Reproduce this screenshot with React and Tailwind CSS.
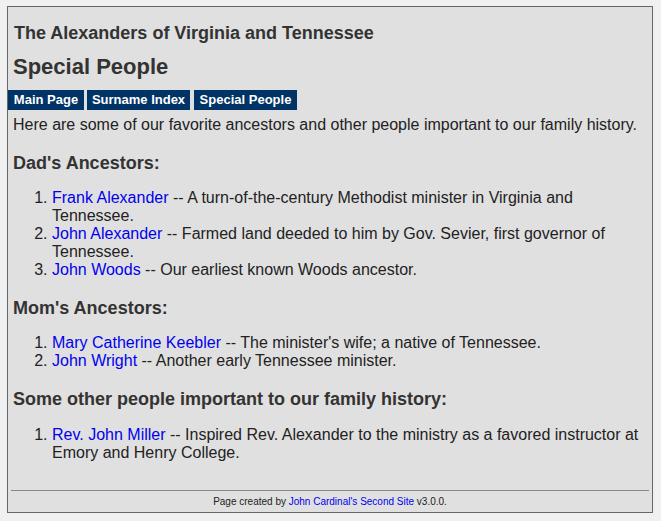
import React from "react";

const dad = [
  { name: "Frank Alexander", text: "A turn-of-the-century Methodist minister in Virginia and Tennessee." },
  { name: "John Alexander", text: "Farmed land deeded to him by Gov. Sevier, first governor of Tennessee." },
  { name: "John Woods", text: "Our earliest known Woods ancestor." },
];

const mom = [
  { name: "Mary Catherine Keebler", text: "The minister's wife; a native of Tennessee." },
  { name: "John Wright", text: "Another early Tennessee minister." },
];

const others = [
  { name: "Rev. John Miller", text: "Inspired Rev. Alexander to the ministry as a favored instructor at Emory and Henry College." },
];

function PeopleList({ items }) {
  return (
    <ol className="list-decimal pl-[39px] text-[16px] leading-[18px]">
      {items.map((p) => (
        <li key={p.name}>
          <a href="#" className="text-[#0000ee]">{p.name}</a> -- {p.text}
        </li>
      ))}
    </ol>
  );
}

function Heading({ children, className }) {
  return <h3 className={"text-[18px] leading-[22px] font-bold text-[#333] " + className}>{children}</h3>;
}

export default function App() {
  return (
    <div className="min-h-[521px] bg-[#f0f0f0] pt-[6px] px-[7px] font-['Liberation_Sans',Arial,sans-serif] text-[#222]">
      <div className="w-[646px] h-[507px] border border-[#666] bg-[#e0e0e0] px-[5px] flex flex-col">
        <h1 className="mt-[16px] ml-[1px] text-[18px] leading-[20px] font-bold text-[#333]">
          The Alexanders of Virginia and Tennessee
        </h1>
        <h2 className="mt-[11px] text-[22px] leading-[26px] font-bold text-[#333]">Special People</h2>
        <nav className="mt-[10px] -ml-[5px] flex gap-[3px] text-[13px] font-bold text-white">
          <a href="#" className="h-[20px] w-[76px] bg-[#003366] flex items-center justify-center">Main Page</a>
          <a href="#" className="h-[20px] w-[103px] bg-[#003366] flex items-center justify-center">Surname Index</a>
          <a href="#" className="ml-[1px] h-[20px] w-[103px] bg-[#003366] flex items-center justify-center">Special People</a>
        </nav>
        <p className="mt-[6px] text-[16px] leading-[18px]">
          Here are some of our favorite ancestors and other people important to our family history.
        </p>

        <Heading className="mt-[18px] mb-[15px]">Dad's Ancestors:</Heading>
        <PeopleList items={dad} />

        <Heading className="mt-[18px] mb-[15px]">Mom's Ancestors:</Heading>
        <PeopleList items={mom} />

        <Heading className="mt-[18px] mb-[16px]">Some other people important to our family history:</Heading>
        <PeopleList items={others} />

        <div className="mt-auto">
          <hr className="mx-[-2px] border-t border-[#888]" />
          <p className="pt-[5px] pb-[4px] text-center text-[10px] leading-[12px] text-[#222]">
            Page created by <a href="#" className="text-[#0000ee]">John Cardinal's Second Site</a> v3.0.0.
          </p>
        </div>
      </div>
    </div>
  );
}
